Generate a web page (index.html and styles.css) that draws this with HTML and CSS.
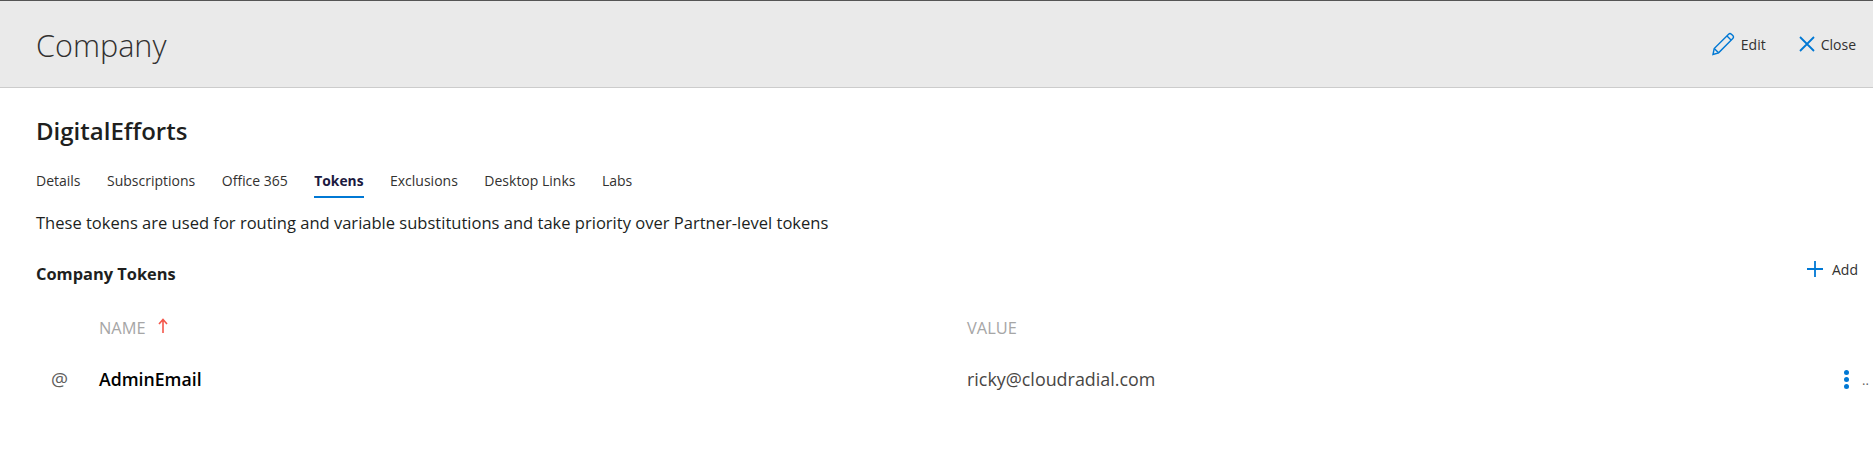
FILE: index.html
```html
<!DOCTYPE html>
<html lang="en">
<head>
  <meta charset="UTF-8">
  <title>Company</title>
  <link rel="stylesheet" href="styles.css">
</head>
<body>
  <div class="header">
    <h1>Company</h1>
    <div class="header-actions">
      <a class="action">
        <svg class="icon-edit" width="24" height="24" viewBox="0 0 24 24" fill="none" stroke="#0078d4" stroke-width="1.4"><path d="M2 22.5l1.2-6L17.6 2.2a2 2 0 0 1 2.8 0l1.4 1.4a2 2 0 0 1 0 2.8L7.6 20.8z"/><path d="M3.2 16.5l4.4 4.3M16 4l4 4"/></svg>
        Edit
      </a>
      <a class="action">
        <svg width="16" height="16" viewBox="0 0 16 16" fill="none" stroke="#0078d4" stroke-width="1.8"><path d="M1 1l14 14M15 1L1 15"/></svg>
        Close
      </a>
    </div>
  </div>
  <div class="content">
    <h2>DigitalEfforts</h2>
    <div class="tabs">
      <a class="tab">Details</a>
      <a class="tab">Subscriptions</a>
      <a class="tab">Office 365</a>
      <a class="tab active">Tokens</a>
      <a class="tab">Exclusions</a>
      <a class="tab">Desktop Links</a>
      <a class="tab">Labs</a>
    </div>
    <p class="description">These tokens are used for routing and variable substitutions and take priority over Partner-level tokens</p>
    <div class="section-head">
      <h3>Company Tokens</h3>
      <a class="action">
        <svg width="18" height="18" viewBox="0 0 18 18" fill="none" stroke="#0078d4" stroke-width="1.8"><path d="M9 1v16M1 9h16"/></svg>
        Add
      </a>
    </div>
    <div class="table-row table-header">
      <div class="col-icon"></div>
      <div class="col-name">NAME
        <svg width="10" height="16" viewBox="0 0 10 16" fill="none" stroke="#f4574b" stroke-width="1.6"><path d="M5 15V1.5M1 6l4-4.5L9 6"/></svg>
      </div>
      <div class="col-value">VALUE</div>
    </div>
    <div class="table-row">
      <div class="col-icon at">@</div>
      <div class="col-name token-name">AdminEmail</div>
      <div class="col-value token-value">ricky@cloudradial.com</div>
      <div class="col-more">
        <div class="dots"><span></span><span></span><span></span></div>
        <span class="clipped">..</span>
      </div>
    </div>
  </div>
</body>
</html>
```

FILE: styles.css
```css
body {
  margin: 0;
  font-family: 'Open Sans', 'Noto Sans', sans-serif;
  background-color: #ffffff;
  color: #201f1e;
  overflow: hidden;
}
.header {
  height: 86px;
  background-color: #eaeaea;
  border-top: 1px solid #555555;
  border-bottom: 1px solid #cccccc;
  padding: 0 22px 0 36px;
  display: flex;
  align-items: center;
  justify-content: space-between;
}
.header h1 {
  margin: 2px 0 0;
  font-size: 30.6px;
  font-weight: 300;
  color: #323130;
}
.header-actions {
  display: flex;
  gap: 33px;
  margin-right: -5px;
}
.action {
  display: flex;
  align-items: center;
  gap: 6px;
  font-size: 14px;
  color: #323130;
}
.content {
  padding: 0 22px 0 36px;
}
.content h2 {
  margin: 27px 0 0;
  font-size: 24px;
  line-height: 32px;
  font-weight: 600;
}
.tabs {
  display: flex;
  gap: 26.5px;
  margin-top: 24px;
}
.tab {
  font-size: 14px;
  line-height: 20px;
  padding-bottom: 5px;
  color: #323130;
  border-bottom: 2px solid transparent;
}
.tab.active {
  font-size: 13.8px;
  font-weight: 700;
  color: #1b1a40;
  border-bottom-color: #0078d4;
}
.description {
  margin: 14px 0 0;
  font-size: 16.55px;
  line-height: 22px;
}
.section-head {
  display: flex;
  align-items: center;
  justify-content: space-between;
  margin-top: 21px;
  height: 30px;
}
.section-head h3 {
  margin: 6px 0 0;
  font-size: 16.4px;
  font-weight: 700;
}
.section-head .action {
  gap: 8px;
  margin-right: -7px;
  margin-bottom: 2px;
}
.table-row {
  display: flex;
  align-items: center;
  margin-top: 22px;
  height: 40px;
}
.table-header {
  font-size: 16.4px;
  color: #a6a6a6;
}
.col-icon {
  width: 63px;
  padding-left: 15px;
  box-sizing: border-box;
}
.col-name {
  width: 868px;
}
.col-name svg {
  margin-left: 8px;
}
.col-value {
  flex: 1;
}
.table-row + .table-row {
  margin-top: 12px;
}
.at {
  font-size: 19px;
  color: #605e5c;
}
.token-name {
  font-size: 17.7px;
  font-weight: 600;
  color: #000000;
}
.token-value {
  font-size: 17.9px;
  color: #484644;
}
.col-more {
  display: flex;
  align-items: center;
  gap: 13px;
  margin-right: -24px;
  width: 31px;
}
.dots {
  display: flex;
  flex-direction: column;
  gap: 2px;
}
.dots span {
  width: 5px;
  height: 5px;
  border-radius: 50%;
  background-color: #0078d4;
}
.clipped {
  font-size: 13px;
  color: #605e5c;
  margin-top: 2px;
}
```
